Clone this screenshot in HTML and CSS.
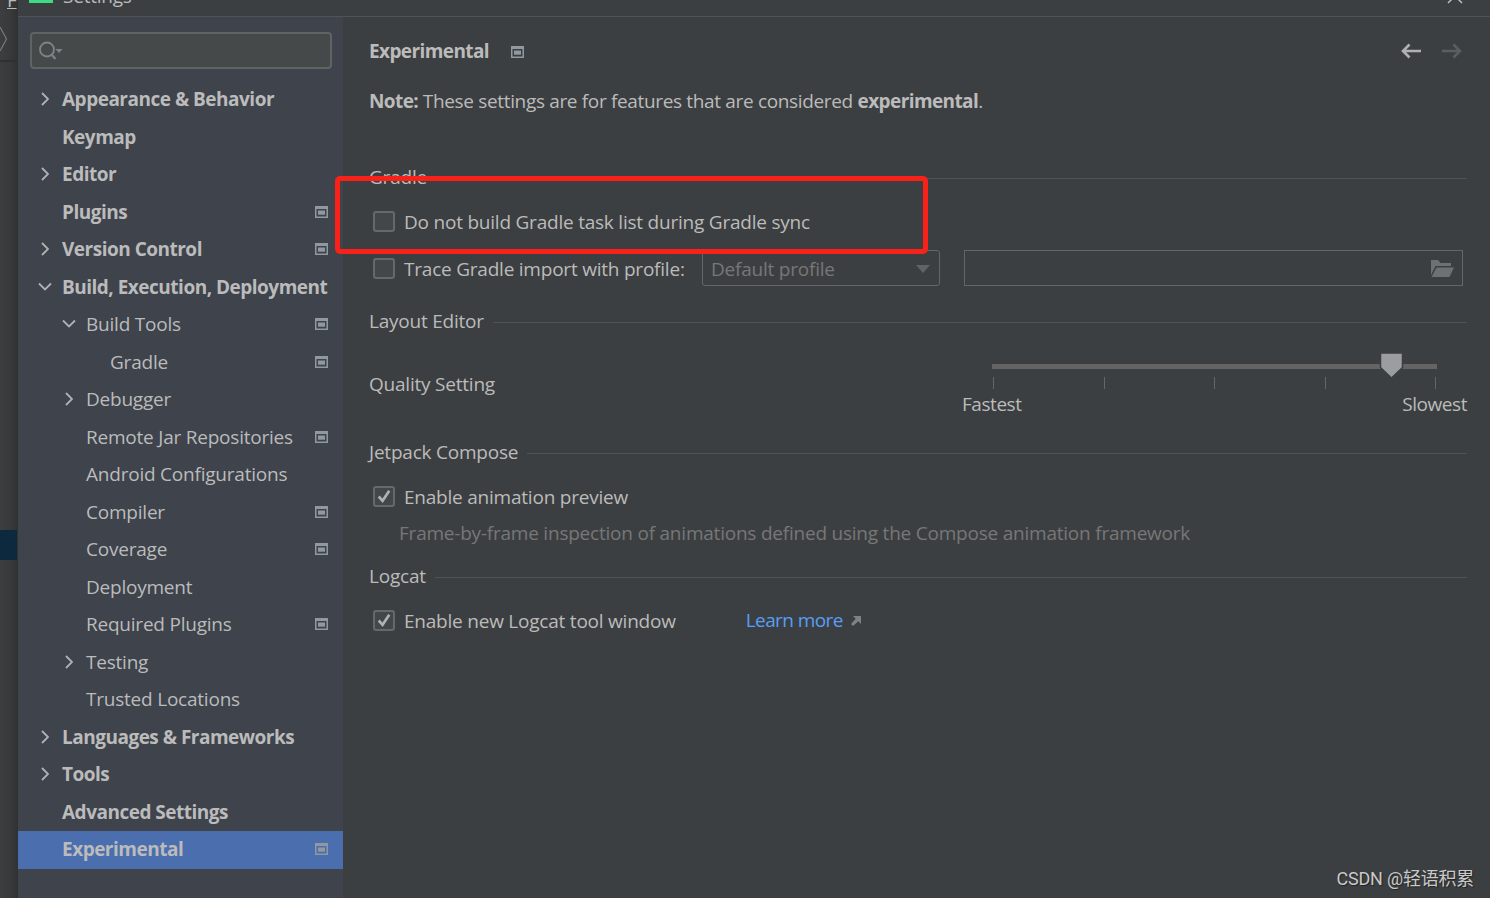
FILE: index.html
```
<!DOCTYPE html>
<html lang="en">
<head>
    <meta charset="UTF-8">
    <meta name="viewport" content="width=device-width, initial-scale=1.0">
    <title>Settings</title>
    <link rel="stylesheet" href="styles.css">
</head>
<body>
    <!-- shared icons -->
    <svg class="defs" width="0" height="0">
        <symbol id="right" viewBox="0 0 16 16"><path d="M5 2l6 6-6 6" fill="none" stroke="currentColor" stroke-width="1.8"/></symbol>
        <symbol id="down" viewBox="0 0 16 16"><path d="M2 4.500l6 6 6-6" fill="none" stroke="currentColor" stroke-width="1.8"/></symbol>
        <symbol id="project" viewBox="0 0 13 12"><path fill-rule="evenodd" d="M0 0h13v12H0zM1.500 3v7.500h10V3z" fill="currentColor"/><path d="M3 4.500h7v4.200H3z" fill="currentColor"/></symbol>
        <symbol id="check" viewBox="0 0 22 22"><path d="M5.500 11l4 4.500L16.500 5" fill="none" stroke="currentColor" stroke-width="2.800"/></symbol>
    </svg>

    <div class="editor">
        <div class="editor-menu"><u>F</u></div>
        <div class="editor-nav"><svg width="8" height="24" viewBox="0 0 8 24"><path d="M0 0l6.500 12L0 24" fill="none" stroke="#77797b" stroke-width="1.200"/></svg></div>
        <div class="editor-selection"></div>
    </div>

    <div class="window">
        <div class="titlebar">
            <span class="logo"></span>
            <span class="title">Settings</span>
            <svg class="close" width="16" height="16" viewBox="0 0 16 16"><path d="M1 1l14 14M15 1L1 15" stroke="#bbb" stroke-width="1.500"/></svg>
        </div>

        <div class="content">
            <nav class="sidebar">
                <div class="search">
                    <svg width="26" height="20" viewBox="0 0 26 20"><circle cx="8" cy="8.500" r="7" fill="none" stroke="#7f8385" stroke-width="1.800"/><path d="M12.500 13.500l4 4.500" stroke="#7f8385" stroke-width="2.200"/><path d="M16.500 8h7l-3.500 4z" fill="#7f8385"/></svg>
                </div>
                <ul class="tree">
                    <li class="top"><svg class="arrow"><use href="#right"/></svg><span>Appearance &amp; Behavior</span></li>
                    <li class="top"><i class="arrow"></i><span>Keymap</span></li>
                    <li class="top"><svg class="arrow"><use href="#right"/></svg><span>Editor</span></li>
                    <li class="top"><i class="arrow"></i><span>Plugins</span><svg class="project"><use href="#project"/></svg></li>
                    <li class="top"><svg class="arrow"><use href="#right"/></svg><span>Version Control</span><svg class="project"><use href="#project"/></svg></li>
                    <li class="top"><svg class="arrow"><use href="#down"/></svg><span>Build, Execution, Deployment</span></li>
                    <li class="sub"><svg class="arrow"><use href="#down"/></svg><span>Build Tools</span><svg class="project"><use href="#project"/></svg></li>
                    <li class="leaf"><i class="arrow"></i><span>Gradle</span><svg class="project"><use href="#project"/></svg></li>
                    <li class="sub"><svg class="arrow"><use href="#right"/></svg><span>Debugger</span></li>
                    <li class="sub"><i class="arrow"></i><span>Remote Jar Repositories</span><svg class="project"><use href="#project"/></svg></li>
                    <li class="sub"><i class="arrow"></i><span>Android Configurations</span></li>
                    <li class="sub"><i class="arrow"></i><span>Compiler</span><svg class="project"><use href="#project"/></svg></li>
                    <li class="sub"><i class="arrow"></i><span>Coverage</span><svg class="project"><use href="#project"/></svg></li>
                    <li class="sub"><i class="arrow"></i><span>Deployment</span></li>
                    <li class="sub"><i class="arrow"></i><span>Required Plugins</span><svg class="project"><use href="#project"/></svg></li>
                    <li class="sub"><svg class="arrow"><use href="#right"/></svg><span>Testing</span></li>
                    <li class="sub"><i class="arrow"></i><span>Trusted Locations</span></li>
                    <li class="top"><svg class="arrow"><use href="#right"/></svg><span>Languages &amp; Frameworks</span></li>
                    <li class="top"><svg class="arrow"><use href="#right"/></svg><span>Tools</span></li>
                    <li class="top"><i class="arrow"></i><span>Advanced Settings</span></li>
                    <li class="top selected"><i class="arrow"></i><span>Experimental</span><svg class="project"><use href="#project"/></svg></li>
                </ul>
            </nav>

            <main class="panel">
                <header class="panel-header">
                    <h1>Experimental</h1>
                    <svg class="project"><use href="#project"/></svg>
                    <div class="history">
                        <svg width="20" height="16" viewBox="0 0 20 16"><path d="M20 8H2M8.500 1.500L2 8l6.500 6.500" fill="none" stroke="#afb1b3" stroke-width="2.600"/></svg>
                        <svg width="20" height="16" viewBox="0 0 20 16"><path d="M0 8h18M11.500 1.500L18 8l-6.500 6.500" fill="none" stroke="#5b5e60" stroke-width="2.600"/></svg>
                    </div>
                </header>
                <p class="note"><b>Note:</b> <span>These settings are for features that are considered</span> <b>experimental</b>.</p>

                <h2>Gradle</h2>
                <div class="option">
                    <span class="checkbox"></span>
                    <label>Do not build Gradle task list during Gradle sync</label>
                </div>
                <div class="option trace">
                    <span class="checkbox"></span>
                    <label>Trace Gradle import with profile:</label>
                    <div class="select">
                        <span>Default profile</span>
                        <svg width="14" height="8" viewBox="0 0 14 8"><path d="M0 0h14L7 8z" fill="#606365"/></svg>
                    </div>
                    <div class="file">
                        <svg width="23" height="17" viewBox="0 0 23 17"><path d="M0 0h7l2.500 3H20v3H4.500L0 15z" fill="#6e7173"/><path d="M5.500 7.500H23L18.500 17H.5z" fill="#6e7173"/></svg>
                    </div>
                </div>

                <h2>Layout Editor</h2>
                <div class="quality">
                    <label>Quality Setting</label>
                    <div class="slider">
                        <div class="track"><svg class="thumb" width="25" height="27" viewBox="0 0 25 27"><path d="M1.500 1h22v14.500l-11 10.500-11-10.500z" fill="#9b9e9f" stroke="#3c3f41" stroke-width="1.500"/></svg></div>
                        <div class="ticks"><i></i><i></i><i></i><i></i><i></i></div>
                        <div class="scale"><span>Fastest</span><span>Slowest</span></div>
                    </div>
                </div>

                <h2>Jetpack Compose</h2>
                <div class="option">
                    <span class="checkbox"><svg><use href="#check"/></svg></span>
                    <label>Enable animation preview</label>
                </div>
                <p class="hint">Frame-by-frame inspection of animations defined using the Compose animation framework</p>

                <h2>Logcat</h2>
                <div class="option">
                    <span class="checkbox"><svg><use href="#check"/></svg></span>
                    <label>Enable new Logcat tool window</label>
                    <a class="link">Learn more</a>
                    <svg width="10" height="10" viewBox="0 0 10 10"><path d="M2 0h8v8L7.300 5.300 2 10 0 8l4.700-5.300z" fill="#7f8284"/></svg>
                </div>
            </main>
        </div>
    </div>

    <div class="highlight"></div>
    <div class="watermark">CSDN @轻语积累</div>
</body>
</html>
```
FILE: styles.css
```
* {
    box-sizing: border-box;
}
body {
    margin: 0;
    width: 1490px;
    height: 898px;
    overflow: hidden;
    position: relative;
    display: flex;
    background: #3c3f41;
    color: #bbbbbb;
    font: 19px/28px "Open Sans", "Noto Sans", sans-serif;
    letter-spacing: -0.22px;
    white-space: nowrap;
}
.defs {
    position: absolute;
}
h1, h2, p, ul {
    margin: 0;
    padding: 0;
    font-size: inherit;
}
b, h1 {
    font-weight: 700;
    letter-spacing: -0.6px;
}

/* strip of the window behind the dialog */
.editor {
    width: 18px;
    background: linear-gradient(to right, #3c3e40, #38393b 60%, #303234);
    border-right: 1px solid #2f3133;
}
.editor-menu {
    height: 17px;
    padding-left: 7px;
    line-height: 0;
    overflow: hidden;
}
.editor-nav {
    height: 45px;
    padding-top: 10px;
    border-bottom: 2px solid #2e3032;
    line-height: 0;
}
.editor-selection {
    height: 30px;
    margin-top: 468px;
    background: #0d293e;
}

.window {
    flex: 1;
    display: flex;
    flex-direction: column;
}
.titlebar {
    display: flex;
    height: 17px;
    padding: 0 27px 0 11px;
    border-bottom: 1px solid #515456;
}
.logo {
    width: 24px;
    height: 3px;
    margin-right: 10px;
    background: #3ddc84;
}
.title {
    line-height: 28px;
    margin-top: -18px;
}
.close {
    margin: -12px 0 0 auto;
}
.content {
    flex: 1;
    display: flex;
}

.sidebar {
    width: 325px;
    background: #3e434c;
}
.search {
    display: flex;
    align-items: center;
    height: 37px;
    margin: 15px 11px 12.4px 12px;
    padding-left: 7px;
    border: 2px solid #5f6364;
    border-radius: 4px;
    background: #45494a;
}
.tree {
    list-style: none;
}
.tree li {
    display: flex;
    align-items: center;
    height: 37.5px;
    padding: 0 15px 2px 19px;
}
.tree .sub {
    padding-left: 43px;
}
.tree .leaf {
    padding-left: 67px;
}
.tree .top {
    font-weight: 700;
    letter-spacing: -0.5px;
}
.tree .selected {
    background: #4b6eaf;
}
.arrow {
    flex: none;
    width: 16px;
    height: 16px;
    margin-right: 9px;
    color: #afb1b3;
}
.project {
    width: 13px;
    height: 12px;
    color: #9099a0;
}
.tree .project {
    margin-left: auto;
}

.panel {
    flex: 1;
    padding: 0 23px 0 26px;
}
.panel-header {
    display: flex;
    align-items: center;
    height: 68px;
}
.panel-header .project {
    margin: 2px 0 0 22px;
}
.history {
    display: flex;
    gap: 21px;
    margin: 0 5px 0 auto;
}
.note {
    height: 34px;
    line-height: 33px;
    margin-bottom: 41px;
}
.note span {
    letter-spacing: -0.34px;
}
h2 {
    display: flex;
    align-items: center;
    gap: 9px;
    height: 36px;
    margin-bottom: 2px;
    padding-bottom: 2px;
    font-weight: 400;
}
h2::after {
    content: "";
    flex: 1;
    height: 1px;
    margin-top: 3px;
    background: #515456;
}
.option {
    display: flex;
    align-items: center;
    height: 48px;
    padding-left: 4px;
}
.checkbox {
    width: 22px;
    height: 21px;
    margin: -2px 9px 0 0;
    border: 2px solid #66696b;
    border-radius: 3px;
    background: #43474a;
}
.checkbox svg {
    display: block;
    width: 22px;
    height: 21px;
    margin: -2px;
    color: #afb1b3;
}
.trace {
    height: 46px;
    margin-bottom: 12px;
    padding-right: 4px;
}
.trace label {
    width: 298px;
}
.select {
    display: flex;
    align-items: center;
    justify-content: space-between;
    width: 238px;
    height: 36px;
    margin: -2px 24px 0 0;
    padding: 1px 9px 0 8px;
    border: 1px solid #646769;
    border-radius: 3px;
    color: #777777;
}
.file {
    flex: 1;
    display: flex;
    align-items: center;
    justify-content: flex-end;
    height: 36px;
    margin-top: -2px;
    padding: 1px 8px 0 0;
    border: 1px solid #646769;
}
.quality {
    display: flex;
    align-items: center;
    justify-content: space-between;
    height: 86px;
    margin-bottom: 7px;
    padding-bottom: 2px;
}
.slider {
    width: 505px;
    margin-top: 13px;
}
.track {
    position: relative;
    height: 5px;
    margin: 0 30px;
    background: #646464;
}
/* thumb sits over the track */
.thumb {
    position: absolute;
    left: 387px;
    top: -12px;
}
.ticks {
    display: flex;
    justify-content: space-between;
    margin: 8px 31px 1px;
}
.ticks i {
    width: 1px;
    height: 12px;
    background: #646769;
}
.scale {
    display: flex;
    justify-content: space-between;
    letter-spacing: -0.45px;
}
.hint {
    height: 38px;
    padding-left: 30px;
    line-height: 25px;
    color: #777777;
}
.link {
    margin: -2px 8px 0 70px;
    color: #589df6;
    letter-spacing: -0.6px;
}

/* annotation frame over the dialog */
.highlight {
    position: absolute;
    left: 335px;
    top: 176px;
    width: 593px;
    height: 78px;
    border: 5px solid #fa2218;
    border-radius: 5px;
}
.watermark {
    position: absolute;
    right: 16px;
    bottom: 5px;
    color: #c8c9ca;
    font: 18px/28px Roboto, "Noto Sans CJK SC", sans-serif;
    text-shadow: 1px 1px 1px #222;
}
```
